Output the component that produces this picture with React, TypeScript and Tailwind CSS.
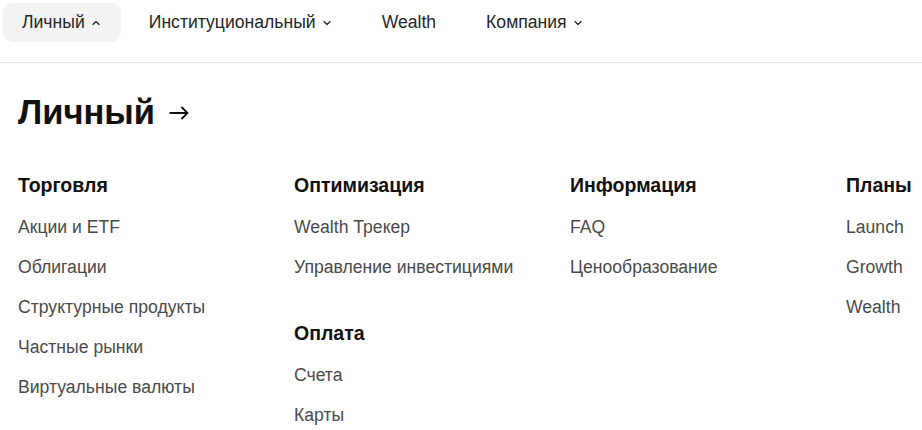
import React from "react";
import { ChevronDown, ChevronUp } from "lucide-react";

const columns = [
  {
    groups: [
      {
        title: "Торговля",
        links: ["Акции и ETF", "Облигации", "Структурные продукты", "Частные рынки", "Виртуальные валюты"],
      },
    ],
  },
  {
    groups: [
      { title: "Оптимизация", links: ["Wealth Трекер", "Управление инвестициями"] },
      { title: "Оплата", links: ["Счета", "Карты"] },
    ],
  },
  {
    groups: [{ title: "Информация", links: ["FAQ", "Ценообразование"] }],
  },
  {
    groups: [{ title: "Планы", links: ["Launch", "Growth", "Wealth"] }],
  },
];

const App = () => {
  return (
    <div className="w-[922px] h-[430px] overflow-hidden bg-white font-['Liberation_Sans',Arial,sans-serif]">
      {/* Top nav */}
      <nav className="h-[63px] border-b border-[#e8e8e8] flex items-start pt-[3px] pl-[3px]">
        <button className="h-[39px] pl-[19px] pr-[19px] rounded-[10px] bg-[#f3f3f3] flex items-center gap-[5px] text-[17.6px] text-[#262626]">
          Личный <ChevronUp size={12} strokeWidth={2.5} />
        </button>
        <button className="h-[39px] ml-[9px] px-[19px] flex items-center gap-[5px] text-[17.6px] text-[#262626]">
          Институциональный <ChevronDown size={12} strokeWidth={2.5} />
        </button>
        <button className="h-[39px] ml-[11px] px-[19px] flex items-center text-[17.6px] text-[#262626]">
          Wealth
        </button>
        <button className="h-[39px] ml-[12px] px-[19px] flex items-center gap-[5px] text-[17.6px] text-[#262626]">
          Компания <ChevronDown size={12} strokeWidth={2.5} />
        </button>
      </nav>

      <div className="pl-[18px]">
        {/* Title */}
        <div className="flex items-center gap-[14px] mt-[29px] h-[40px]">
          <h1 className="text-[34.5px] font-bold text-[#111] leading-none">Личный</h1>
          <svg width="20" height="14" viewBox="0 0 20 14" fill="none" stroke="#111" strokeWidth="1.8" className="mt-[2px]">
            <path d="M0.5 7H18.5M12.5 1L18.5 7L12.5 13" />
          </svg>
        </div>

        {/* Columns */}
        <div className="grid grid-cols-[repeat(4,276px)] mt-[40px]">
          {columns.map((col, i) => (
            <div key={i} className="flex flex-col">
              {col.groups.map((g, j) => (
                <div key={j} className={j > 0 ? "mt-[33px]" : ""}>
                  <h3 className="text-[19.5px] font-bold text-[#111] h-[26px] leading-[26px]">{g.title}</h3>
                  <ul className="mt-[9px]">
                    {g.links.map((l) => (
                      <li key={l} className="h-[40px] flex items-center text-[17.6px] text-[#4a4a4a] whitespace-nowrap">
                        {l}
                      </li>
                    ))}
                  </ul>
                </div>
              ))}
            </div>
          ))}
        </div>
      </div>
    </div>
  );
};

export default App;
